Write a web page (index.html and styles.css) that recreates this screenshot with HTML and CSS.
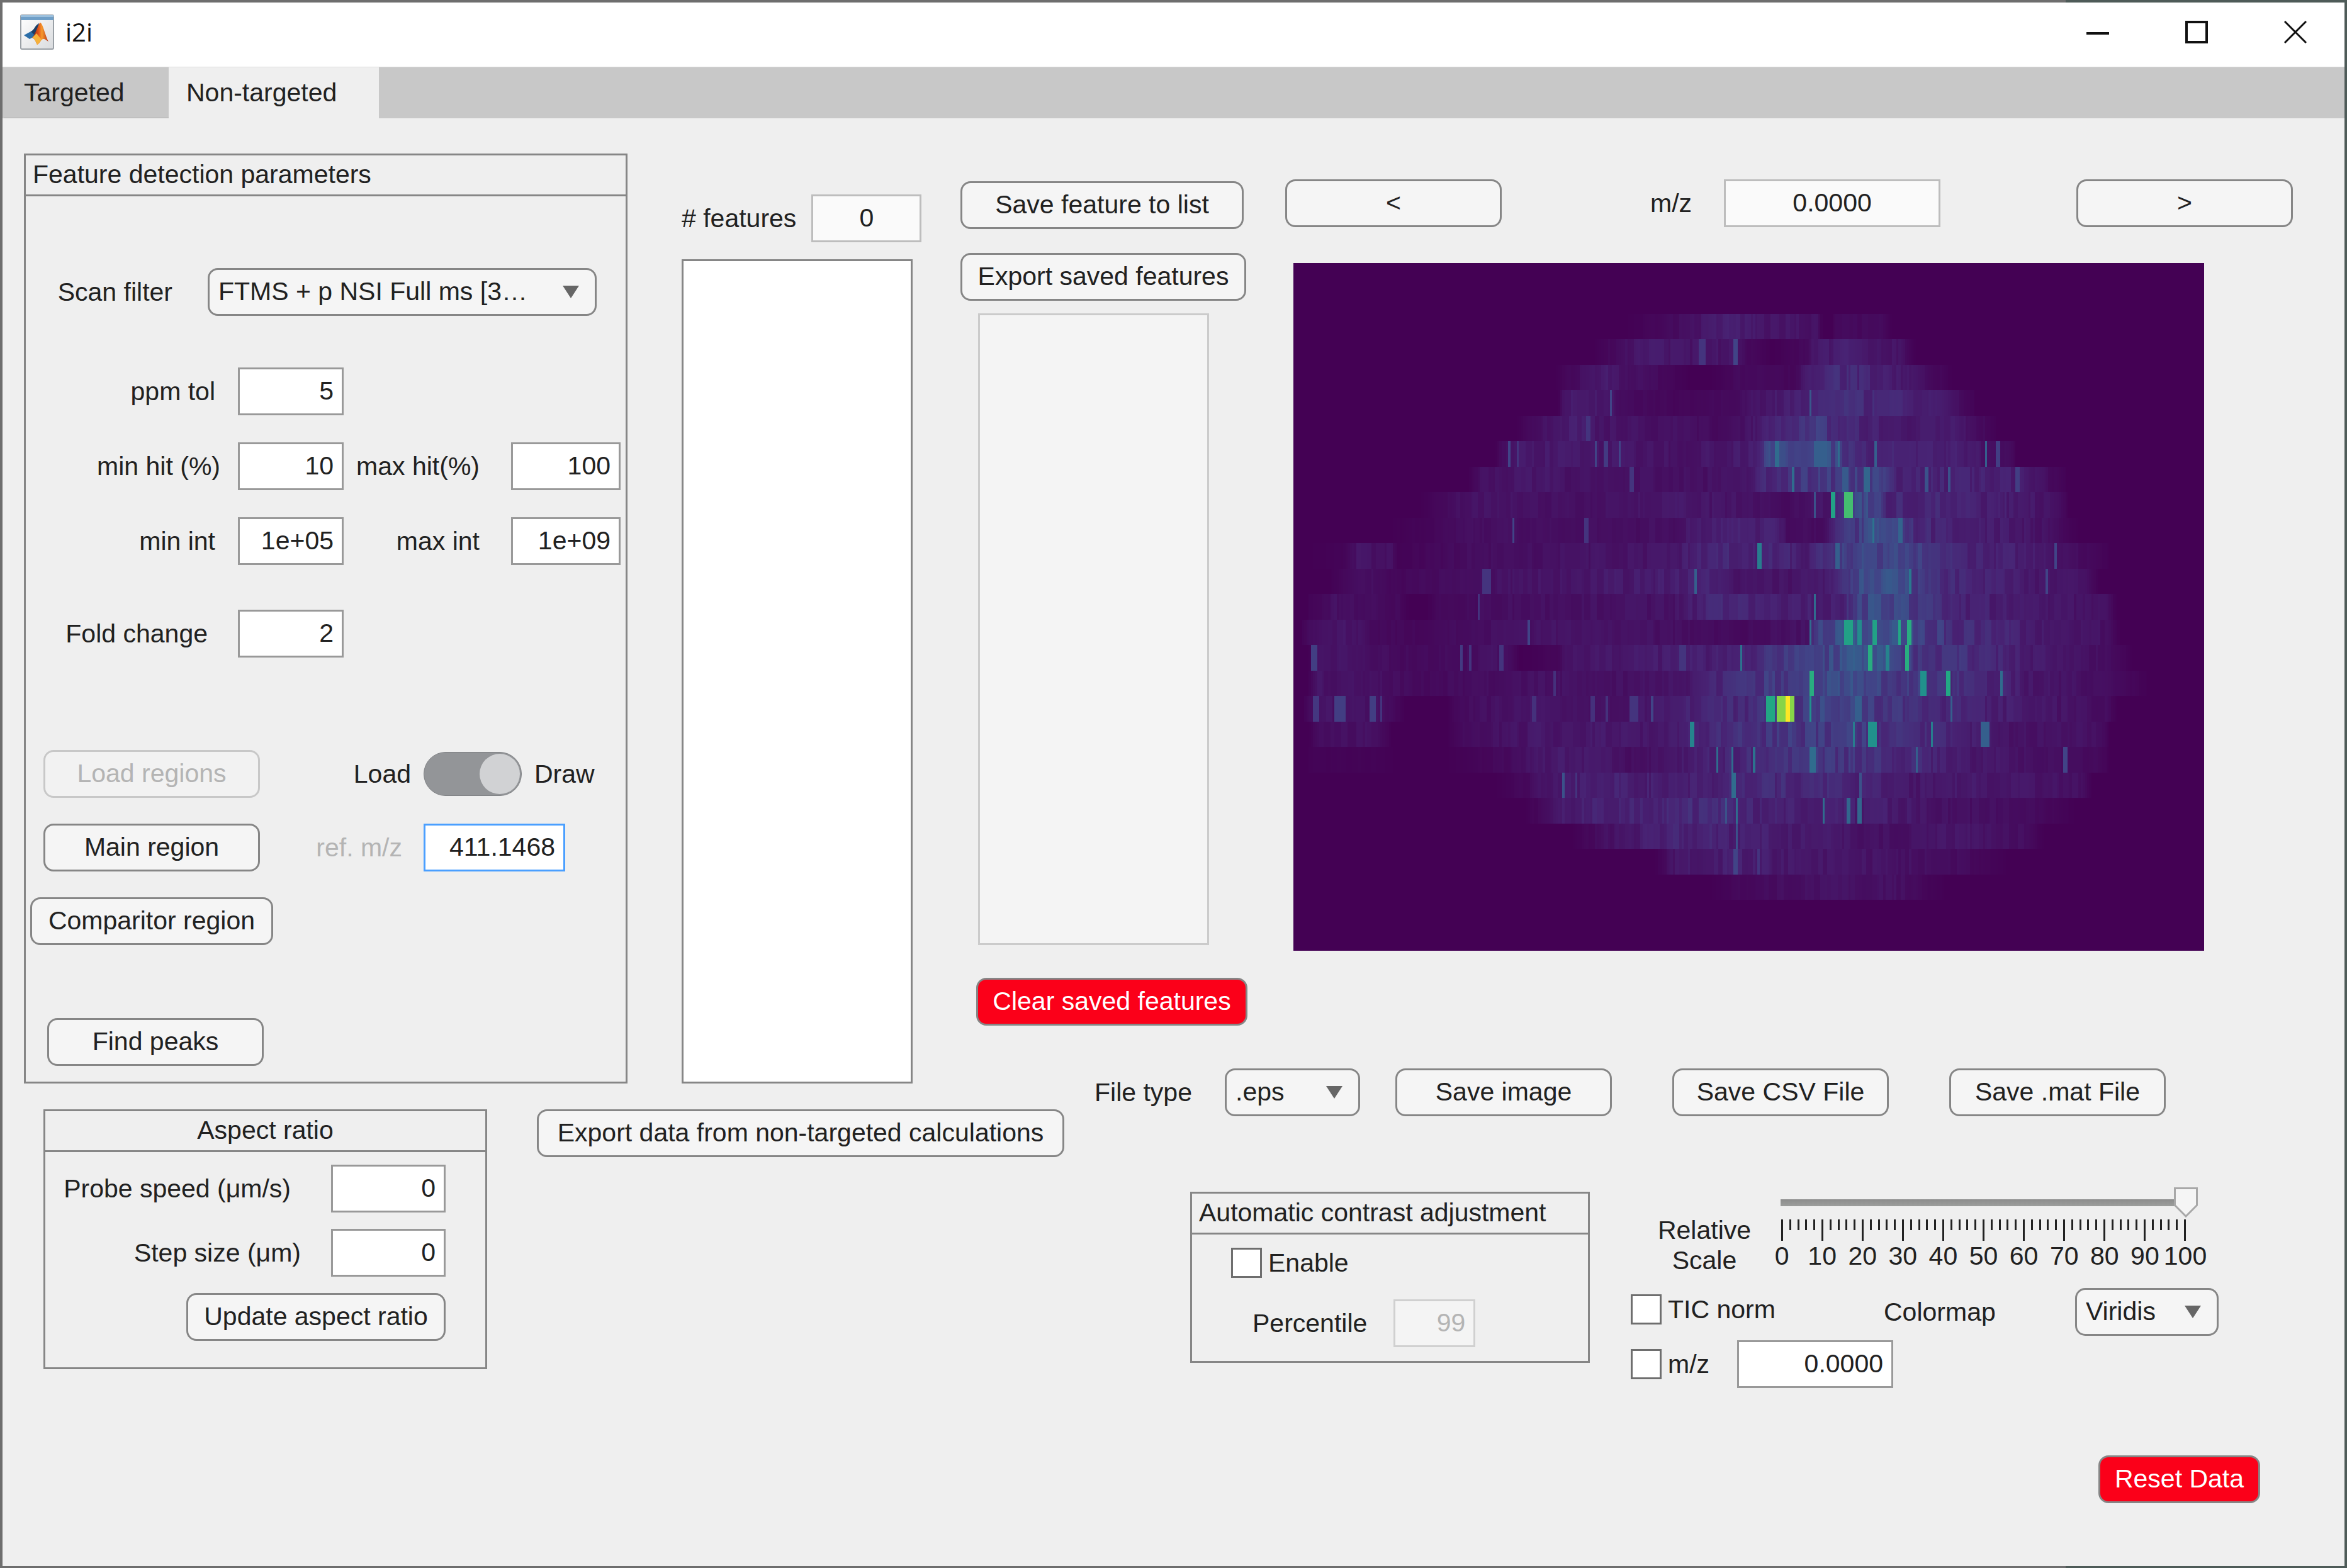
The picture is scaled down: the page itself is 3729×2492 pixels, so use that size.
FILE: index.html
```html
<!DOCTYPE html>
<html lang="en">
<head>
<meta charset="utf-8">
<meta name="viewport" content="width=device-width, initial-scale=1">
<title>i2i</title>
<link rel="stylesheet" href="styles.css">
</head>
<body>
<div class="window">
  <header class="titlebar">
    <svg class="app-icon" viewBox="0 0 54 56" aria-hidden="true">
      <defs>
        <linearGradient id="frame" x1="0" y1="0" x2="1" y2="1"><stop offset="0" stop-color="#ffffff"/><stop offset="1" stop-color="#d9dbde"/></linearGradient>
        <linearGradient id="peak" x1="0" y1="0" x2="1" y2="0"><stop offset="0" stop-color="#8c1d12"/><stop offset=".4" stop-color="#e2561b"/><stop offset=".6" stop-color="#f59a2d"/><stop offset="1" stop-color="#b8321a"/></linearGradient>
      </defs>
      <rect x="1" y="1" width="52" height="54" rx="2" fill="url(#frame)" stroke="#9aa0a6" stroke-width="2"/>
      <rect x="1" y="1" width="52" height="8" fill="#6f9fc8"/>
      <rect x="1" y="1" width="52" height="3" fill="#9cc0dd"/>
      <path d="M6 33l11-6c5-1 6-9 13-13l-7 25-4-2-4 2z" fill="#2b6ea8"/>
      <path d="M17 27c5-1 6-9 13-13l-6 20z" fill="#1c3f66"/>
      <path d="M32 13c-3 1-7 18-13 24 3 0 5 4 8 11 5-2 6-9 10-9 3 0 4 2 8 4-5-9-9-29-13-30z" fill="url(#peak)"/>
      <path d="M19 37c3 0 5 4 8 11 3-1 5-6 7-8l-8-10z" fill="#f6b23a"/>
    </svg>
    <h1 class="titlebar-name">i2i</h1>
    <div class="titlebar-buttons">
      <button class="titlebar-button" type="button" aria-label="Minimize"><svg viewBox="0 0 36 36" aria-hidden="true"><path d="M0 20h36"/></svg></button>
      <button class="titlebar-button" type="button" aria-label="Maximize"><svg viewBox="0 0 36 36" aria-hidden="true"><path d="M2 2h32v32H2z"/></svg></button>
      <button class="titlebar-button" type="button" aria-label="Close"><svg viewBox="0 0 36 36" aria-hidden="true"><path d="M1 1l34 34M35 1L1 35"/></svg></button>
    </div>
  </header>

  <nav class="tabs" role="tablist">
    <button class="tab tab-targeted" type="button" role="tab" aria-selected="false">Targeted</button>
    <button class="tab tab-selected" type="button" role="tab" aria-selected="true">Non-targeted</button>
  </nav>

  <main class="workspace">
    <section class="panel detection">
      <h2 class="panel-title">Feature detection parameters</h2>
      <div class="row scan-row">
        <label class="lead-label gap-xl" for="scan">Scan filter</label>
        <span class="dropdown dropdown-scan"><select id="scan"><option>FTMS + p NSI Full ms [3…</option></select></span>
      </div>
      <div class="thresholds">
        <div class="row">
          <label class="lead-label" for="ppm">ppm tol</label>
          <input class="field field-min" id="ppm" type="text" value="5">
        </div>
        <div class="row">
          <label class="lead-label gap-sm" for="minhit">min hit (%)</label>
          <input class="field field-min" id="minhit" type="text" value="10">
          <label class="max-label" for="maxhit">max hit(%)</label>
          <input class="field field-max" id="maxhit" type="text" value="100">
        </div>
        <div class="row">
          <label class="lead-label" for="minint">min int</label>
          <input class="field field-min" id="minint" type="text" value="1e+05">
          <label class="max-label" for="maxint">max int</label>
          <input class="field field-max" id="maxint" type="text" value="1e+09">
        </div>
      </div>
      <div class="row fold-row">
        <label class="lead-label gap-lg" for="fold">Fold change</label>
        <input class="field field-min" id="fold" type="text" value="2">
      </div>
      <div class="regions">
        <button class="button" type="button" disabled>Load regions</button>
        <label class="region-label gap-xs" for="mode">Load</label>
        <div class="mode">
          <input class="switch" id="mode" type="checkbox" role="switch" checked>
          <label for="mode">Draw</label>
        </div>
        <button class="button" type="button">Main region</button>
        <label class="region-label is-muted" for="refmz">ref. m/z</label>
        <input class="field field-ref is-focused" id="refmz" type="text" value="411.1468">
        <button class="button button-comparitor" type="button">Comparitor region</button>
      </div>
      <div class="find-row"><button class="button" type="button">Find peaks</button></div>
    </section>

    <section class="features">
      <div class="row features-count">
        <label for="count"># features</label>
        <input class="field field-count is-readonly" id="count" type="text" value="0" readonly>
      </div>
      <select class="listbox" size="20" aria-label="Detected features"></select>
    </section>

    <section class="saved">
      <button class="button button-save-feature" type="button">Save feature to list</button>
      <button class="button button-export-saved" type="button">Export saved features</button>
      <select class="listbox listbox-saved" size="20" aria-label="Saved features" disabled></select>
      <button class="button button-danger button-clear" type="button">Clear saved features</button>
    </section>

    <section class="viewer">
      <div class="row viewer-nav">
        <button class="button" type="button" aria-label="Previous feature">&lt;</button>
        <div class="row viewer-mz">
          <label for="viewmz">m/z</label>
          <input class="field field-viewmz is-readonly" id="viewmz" type="text" value="0.0000" readonly>
        </div>
        <button class="button button-next" type="button" aria-label="Next feature">&gt;</button>
      </div>
      <canvas class="ion-image" id="ion-image" width="420" height="27" role="img" aria-label="Ion image"></canvas>
    </section>

    <div class="lower-left">
      <section class="panel aspect">
        <h2 class="panel-title is-centered">Aspect ratio</h2>
        <div class="aspect-body">
          <div class="row">
            <label class="gap-xxl" for="speed">Probe speed (μm/s)</label>
            <input class="field field-aspect" id="speed" type="text" value="0">
          </div>
          <div class="row">
            <label class="gap-lg" for="step">Step size (μm)</label>
            <input class="field field-aspect" id="step" type="text" value="0">
          </div>
          <button class="button button-aspect" type="button">Update aspect ratio</button>
        </div>
      </section>
      <button class="button button-export-data" type="button">Export data from non-targeted calculations</button>
    </div>

    <section class="output">
      <div class="row file-row">
        <label class="file-label" for="filetype">File type</label>
        <span class="dropdown dropdown-file"><select id="filetype"><option>.eps</option></select></span>
        <div class="file-buttons">
          <button class="button" type="button">Save image</button>
          <button class="button" type="button">Save CSV File</button>
          <button class="button" type="button">Save .mat File</button>
        </div>
      </div>
      <div class="display-row">
        <section class="panel contrast">
          <h2 class="panel-title">Automatic contrast adjustment</h2>
          <div class="contrast-body">
            <label class="check"><input type="checkbox">Enable</label>
            <div class="row percentile-row">
              <label class="gap-md" for="percentile">Percentile</label>
              <input class="field field-percentile" id="percentile" type="text" value="99" disabled>
            </div>
          </div>
        </section>
        <div class="display-options">
          <div class="scale-row">
            <label class="scale-label" for="scale">Relative<br>Scale</label>
            <div class="scale">
              <input class="scale-slider" id="scale" type="range" min="0" max="100" value="100">
              <svg class="scale-ticks" viewBox="0 0 643 34" preserveAspectRatio="none" aria-hidden="true">
                <defs>
                  <pattern id="ticks" width="128" height="34" patternUnits="userSpaceOnUse">
                    <path fill="#222" d="M0 0h3v34H0zM13 0h3v17h-3zM26 0h3v17h-3zM38 0h3v17h-3zM51 0h3v17h-3zM64 0h3v34h-3zM77 0h3v17h-3zM90 0h3v17h-3zM102 0h3v17h-3zM115 0h3v17h-3z"/>
                  </pattern>
                </defs>
                <rect width="643" height="34" fill="url(#ticks)"/>
              </svg>
              <div class="scale-numbers" aria-hidden="true">
                <span>0</span><span>10</span><span>20</span><span>30</span><span>40</span><span>50</span><span>60</span><span>70</span><span>80</span><span>90</span><span>100</span>
              </div>
            </div>
          </div>
          <div class="row option-row">
            <label class="check check-tic"><input type="checkbox">TIC norm</label>
            <label class="colormap-label" for="colormap">Colormap</label>
            <span class="dropdown dropdown-map"><select id="colormap"><option>Viridis</option></select></span>
          </div>
          <div class="row option-row">
            <label class="check check-mz"><input type="checkbox">m/z</label>
            <input class="field field-norm" type="text" value="0.0000" aria-label="Normalisation m/z">
          </div>
        </div>
      </div>
      <button class="button button-danger button-reset" type="button">Reset Data</button>
    </section>
  </main>
</div>
<script src="ion-image.js"></script>
</body>
</html>
```
FILE: styles.css
```css
*, *::before, *::after { box-sizing: border-box; }

body {
  margin: 0;
  color: #212121;
  font-family: "Liberation Sans", Arial, Helvetica, sans-serif;
  font-size: 41px;
  line-height: 48px;
}

button, input, select { color: inherit; font: inherit; }
h1, h2 { margin: 0; font-weight: 400; }
label { white-space: nowrap; }

/* Window chrome */
.window {
  display: flex;
  flex-direction: column;
  min-height: 100vh;
  padding: 4px 4px 3px;
  background: linear-gradient(90deg, #6e6e6e 88%, #4e5b58 88%);
}

.titlebar {
  display: flex;
  align-items: center;
  height: 102px;
  padding: 0 0 8px 28px;
  background: #fff;
}
.app-icon { width: 54px; height: 56px; }
.titlebar-name {
  margin-left: 18px;
  color: #111;
  font-family: "Open Sans", "Noto Sans", sans-serif;
  font-size: 40px;
}
.titlebar-buttons { display: flex; margin-left: auto; }
.titlebar-button {
  display: grid;
  place-items: center;
  width: 157px;
  height: 92px;
  padding: 0;
  border: 0;
  background: none;
}
.titlebar-button svg {
  width: 36px;
  height: 36px;
  fill: none;
  stroke: #111;
  stroke-width: 4;
}
.titlebar-button:last-child svg { stroke-width: 3; }

.tabs {
  display: flex;
  height: 82px;
  padding-left: 2px;
  background: #c8c8c8;
  border-top: 1px solid #dcdcdc;
}
.tab {
  padding: 0;
  border: 0;
  border-bottom: 2px solid #c0c0c0;
  background: #c8c8c8;
  text-align: left;
}
.tab-targeted { width: 262px; padding-left: 32px; }
.tab-selected { width: 334px; padding-left: 28px; border-bottom-color: #efefef; background: #efefef; }

/* Shared controls */
.row { display: flex; align-items: center; }

.button {
  width: 344px;
  height: 76px;
  padding: 0 0 2px;
  border: 3px solid #868686;
  border-radius: 16px;
  background: #f5f5f5;
  white-space: nowrap;
}
.button:disabled { border-color: #c8c8c8; background: #f2f2f2; color: #b4b4b4; }
.button-danger { background: #fb0019; color: #fff; }

.field {
  height: 76px;
  padding: 0 13px 2px;
  border: 3px solid #999;
  border-radius: 0;
  background: #fff;
  text-align: right;
}
.field:disabled { border-color: #d0d0d0; background: #f4f4f4; color: #b4b4b4; }
.field.is-readonly { border-color: #bdbdbd; background: #fafafa; text-align: center; }
.field.is-focused { border-color: #4a9fff; }

.dropdown { display: flex; position: relative; }
.dropdown select {
  width: 100%;
  height: 76px;
  padding: 0 0 2px 14px;
  border: 3px solid #868686;
  border-radius: 16px;
  background: #f5f5f5;
  appearance: none;
}
.dropdown::after {
  content: "";
  position: absolute;
  top: 28px;
  right: 28px;
  width: 26px;
  height: 20px;
  background: #666;
  clip-path: polygon(0 0, 100% 0, 50% 100%);
  pointer-events: none;
}

.check { display: flex; align-items: center; gap: 10px; height: 48px; }
.check input {
  width: 49px;
  height: 48px;
  margin: 0;
  border: 3px solid #6e6e6e;
  background: #fff;
  appearance: none;
}

.listbox {
  flex: 1 1 0;
  width: 367px;
  min-height: 0;
  padding: 0;
  border: 3px solid #868686;
  border-radius: 0;
  background: #fff;
  appearance: none;
}
.listbox:disabled { border-color: #cbcbcb; background: #f4f4f4; opacity: 1; }

.panel { border: 3px solid #868686; }
.panel-title {
  height: 65px;
  padding: 6px 11px 0;
  border-bottom: 3px solid #868686;
  font-size: 41px;
}
.panel-title.is-centered { text-align: center; }

.gap-xs { padding-right: 20px; }
.gap-sm { padding-right: 28px; }
.gap-md { padding-right: 42px; }
.gap-lg { padding-right: 48px; }
.gap-xl { padding-right: 56px; }
.gap-xxl { padding-right: 64px; }

/* Workspace grid */
.workspace {
  flex: 1;
  display: grid;
  grid-template-columns:
    minmax(0, 1045fr) minmax(0, 443fr) minmax(0, 213fr)
    minmax(0, 303fr) minmax(0, 1601fr);
  grid-template-rows: auto 65px 1fr;
  padding: 56px 82px 0 34px;
  background: #efefef;
}

/* Feature detection panel */
.detection {
  grid-area: 1 / 1 / 3 / 2;
  margin: 0 86px 41px 0;
}
.lead-label { width: 337px; text-align: right; }
.lead-label:not(.gap-sm, .gap-lg, .gap-xl) { padding-right: 36px; }
.lead-label.gap-xl { width: 289px; }
.scan-row { margin-top: 114px; }
.dropdown-scan { width: 618px; }
.thresholds { display: grid; gap: 43px; margin-top: 82px; }
.field-min { width: 168px; }
.max-label { width: 266px; padding-right: 50px; text-align: right; }
.field-max { width: 174px; }
.fold-row { margin-top: 71px; }
.regions {
  display: grid;
  grid-template-columns: 400px 232px 1fr;
  align-items: center;
  gap: 41px 0;
  margin-top: 147px;
}
.regions > .button { justify-self: center; }
.button-comparitor { width: 386px; }
.region-label { text-align: right; }
.region-label.is-muted { padding-right: 34px; color: #b4b4b4; }
.mode { display: flex; align-items: center; gap: 20px; }
.switch {
  display: flex;
  justify-content: flex-end;
  width: 156px;
  height: 70px;
  margin: 0;
  padding: 2px;
  border: 1px solid #808285;
  border-radius: 35px;
  background: #939598;
  appearance: none;
}
.switch::before {
  content: "";
  width: 64px;
  height: 64px;
  border-radius: 50%;
  background: #d1d2d4;
}
.field-ref { width: 225px; }
.find-row { padding: 116px 0 23px 34px; display: flex; }

/* Detected and saved feature lists */
.features {
  grid-area: 1 / 2 / 3 / 3;
  display: flex;
  flex-direction: column;
  padding: 65px 0 41px;
}
.features-count { gap: 24px; margin-bottom: 27px; }
.field-count { width: 175px; }

.saved {
  grid-area: 1 / 3 / 2 / 5;
  display: flex;
  flex-direction: column;
  padding: 44px 0 68px;
}
.button-save-feature { width: 450px; }
.button-export-saved { width: 454px; margin-top: 38px; }
.listbox-saved { margin: 20px 0 52px 28px; }
.button-clear { width: 431px; margin-left: 25px; }

/* Ion image viewer */
.viewer { grid-area: 1 / 5 / 2 / 6; padding: 41px 0 187px; }
.viewer-mz { gap: 51px; margin-left: 236px; }
.field-viewmz { width: 344px; }
.button-next { margin-left: auto; }
.ion-image {
  display: block;
  width: calc(100% - 154px);
  aspect-ratio: 1447 / 1093;
  margin: 57px 0 0 13px;
  background: #440154;
  image-rendering: pixelated;
}

/* Aspect ratio and export */
.lower-left {
  grid-area: 3 / 1 / 4 / 4;
  display: flex;
  align-items: flex-start;
  gap: 79px;
  padding-left: 31px;
}
.aspect { width: 705px; }
.aspect-body {
  display: flex;
  flex-direction: column;
  align-items: flex-end;
  gap: 26px;
  padding: 20px 63px 42px 0;
}
.field-aspect { width: 182px; }
.button-aspect { width: 412px; }
.button-export-data { width: 838px; }

/* Output and display options */
.output {
  grid-area: 2 / 4 / 4 / 6;
  display: flex;
  flex-direction: column;
}
.file-label { width: 207px; }
.dropdown-file { width: 215px; }
.file-buttons { display: flex; gap: 96px; margin-left: 56px; }

.display-row {
  display: flex;
  align-items: flex-start;
  gap: 65px;
  margin: 113px 0 0 152px;
}
.contrast { width: 635px; margin-top: 7px; }
.contrast-body { padding: 21px 0 22px 62px; }
.percentile-row { margin: 34px 0 0 34px; }
.field-percentile { width: 130px; }

.scale-row { display: flex; padding-left: 40px; }
.scale-label { width: 154px; margin: 44px 45px 0 0; text-align: center; }
.scale { width: 643px; }
.scale-slider {
  display: block;
  width: 682px;
  height: 48px;
  margin: 0 0 3px -20px;
  background: linear-gradient(#8c8c8c, #9c9e9c) 19px 19px / 643px 11px no-repeat;
  appearance: none;
}
.scale-slider::-webkit-slider-thumb {
  width: 38px;
  height: 48px;
  background: url("data:image/svg+xml,%3Csvg xmlns='http://www.w3.org/2000/svg' viewBox='0 0 38 48'%3E%3Cpath d='M1.5 1.5h35v27L19 46 1.5 28.500z' fill='%23f5f5f5' stroke='%23a8a8a8' stroke-width='3'/%3E%3C/svg%3E") no-repeat;
  appearance: none;
}
.scale-ticks { display: block; width: 643px; height: 34px; }
.scale-numbers { display: flex; margin: 0 -31px; }
.scale-numbers span { display: flex; flex: 1 1 0; justify-content: center; width: 0; }

.option-row { margin-top: 7px; }
.scale-row + .option-row { margin-top: 20px; }
.check-tic { width: 402px; margin-bottom: 8px; }
.colormap-label { width: 304px; }
.dropdown-map { width: 228px; }
.check-mz { width: 169px; }
.field-norm { width: 248px; }

.button-reset { align-self: flex-end; width: 257px; margin: 107px 52px 0 0; }
```
FILE: ion-image.js
```js
// Draws the ion image: one scan line per row, signal mapped through viridis.
(function () {
  var X0 = 50, SPAN = 1312;
  var STOPS = [
    [68, 1, 84], [72, 36, 117], [65, 68, 135], [53, 95, 141], [42, 120, 142],
    [33, 145, 140], [34, 168, 132], [68, 191, 112], [122, 209, 81],
    [189, 223, 38], [253, 231, 37]
  ];

  // Signal envelope per scan line: position, intensity in thousandths.
  var LINES = {
    2: [525,0,560,15,620,50,680,100,720,70,780,60,805,50,810,0,825,0,830,30,895,30,910,0],
    3: [480,0,520,40,560,80,620,60,690,70,700,30,740,0,790,30,800,80,850,90,920,60,945,0],
    4: [425,0,450,30,500,80,540,50,590,20,620,0,650,0,690,30,770,20,790,80,830,140,900,110,950,50,1000,0],
    5: [430,0,440,80,500,80,530,30,600,20,680,30,740,80,790,120,850,140,900,120,960,100,1030,10],
    6: [370,0,410,60,450,90,520,60,600,50,660,30,700,60,740,120,790,200,840,140,900,90,1000,80,1060,10],
    7: [340,0,360,70,420,80,520,70,600,60,680,80,715,100,735,240,790,220,820,270,860,150,900,110,1000,100,1090,20],
    8: [300,0,320,50,400,70,480,50,640,50,700,60,730,140,790,180,850,200,890,250,910,120,1000,110,1090,90,1160,10],
    9: [230,0,270,30,310,70,400,50,600,70,700,60,760,30,820,70,830,100,865,250,890,220,900,130,1000,120,1150,60,1165,0],
    10: [185,0,250,20,330,50,440,40,600,50,640,100,740,100,760,40,810,40,830,130,880,240,910,220,950,130,1050,90,1130,60,1180,0],
    11: [70,0,120,10,140,60,190,50,200,10,300,40,400,50,600,70,650,130,760,120,780,80,820,150,850,240,900,260,940,200,1000,130,1100,90,1210,20,1225,0],
    12: [100,0,150,50,200,20,300,50,450,70,600,90,650,110,700,60,760,60,820,80,840,200,870,250,930,260,960,160,1020,120,1100,80,1190,60,1210,0],
    13: [70,10,110,50,200,30,215,0,240,0,260,30,400,50,600,60,650,130,760,100,840,100,860,240,900,270,940,200,1000,120,1100,80,1220,50,1235,0],
    14: [60,10,90,70,130,70,160,30,240,20,300,40,450,60,600,50,700,30,790,60,800,220,850,300,900,280,940,250,1000,150,1100,100,1220,50,1240,0],
    15: [70,0,80,50,130,60,200,30,300,40,350,60,375,0,430,20,440,60,600,90,690,100,720,160,790,220,850,300,900,260,960,170,1010,160,1100,90,1230,40,1260,0],
    16: [70,0,80,60,130,60,200,40,250,30,400,50,600,60,640,100,740,200,850,270,900,220,1000,150,1070,120,1100,80,1250,30,1280,0],
    17: [65,10,80,60,170,50,190,30,210,0,270,0,290,40,400,60,500,50,620,110,700,140,820,240,870,190,1000,120,1100,80,1220,40,1235,0],
    18: [70,0,90,50,170,50,190,0,270,0,290,30,400,70,600,80,640,120,720,170,850,200,900,170,1000,120,1060,70,1210,50,1225,0],
    19: [70,10,160,10,200,0,270,0,380,40,400,80,500,70,540,40,600,80,740,160,850,180,950,130,1030,80,1210,30,1225,0],
    20: [340,0,390,30,410,70,500,110,600,90,750,140,850,130,930,70,1000,80,1180,50,1200,0],
    21: [380,0,400,20,440,90,550,120,650,140,750,100,900,90,1000,50,1100,40,1160,10,1175,0],
    22: [450,0,500,50,600,120,700,100,800,80,900,50,1000,70,1100,40,1130,0],
    23: [570,0,600,70,680,100,800,70,900,60,1000,40,1060,10,1080,0],
    24: [650,0,700,30,780,50,830,60,920,50,970,10,990,0]
  };

  // Isolated peaks per scan line: centre, width, intensity in thousandths.
  var PEAKS = {
    3: [639,8,150,686,6,200],
    5: [507,4,200,795,4,270],
    6: [475,5,150],
    7: [360,3,200,372,3,150,485,3,200,500,6,170,519,3,200,745,5,350,810,18,300,835,4,350,890,4,300,1050,4,300,1065,6,180],
    8: [537,6,150,769,4,350,845,8,280,877,10,330,960,5,250,994,4,250,1092,6,180],
    9: [829,7,570,800,2,250,849,12,700],
    10: [365,2,200,471,5,150,885,4,380,925,6,320],
    11: [720,5,420,835,6,300,1147,4,200],
    12: [327,12,150,629,3,300,938,4,400,1135,3,200],
    13: [318,3,150,803,4,350],
    14: [388,4,200,795,4,350,865,6,480,850,13,570,885,5,570,922,4,600,935,5,620],
    15: [79,8,180,293,4,170,305,3,150,350,6,150,610,10,150,695,4,380,879,5,620,905,5,450,932,5,620],
    16: [427,4,140,795,5,620,957,10,500,994,5,600,1069,4,350],
    17: [84,10,160,118,16,180,163,8,180,176,4,150,398,6,140,480,6,140,502,4,140,539,12,150,568,4,200,736,12,600,760,24,820,764,7,1000,795,4,500,865,10,300,997,4,300],
    18: [623,5,450,859,4,420,882,11,500,969,4,420,1047,12,300],
    19: [661,3,350,684,3,350,713,4,380,798,10,350,948,4,300,1160,5,200],
    20: [438,4,250,458,4,150,683,5,350,866,3,250],
    21: [672,3,250,689,4,350,814,4,350,848,5,330,866,6,330],
    22: [688,4,250],
    23: [688,6,200,719,4,150]
  };

  var canvas = document.getElementById("ion-image");
  var ctx = canvas.getContext("2d");
  var cols = canvas.width;
  var image = ctx.createImageData(cols, canvas.height);
  var seed = 7;

  function random() {
    seed = (seed * 16807) % 2147483647;
    return seed / 2147483647;
  }

  function envelope(line, x) {
    for (var i = 0; line && i + 3 < line.length; i += 2) {
      if (x >= line[i] && x < line[i + 2]) {
        var t = (x - line[i]) / (line[i + 2] - line[i]);
        return (line[i + 1] + t * (line[i + 3] - line[i + 1])) / 1000;
      }
    }
    return 0;
  }

  for (var row = 0; row < canvas.height; row++) {
    var values = [], run = 0, gain = 1, col, i;
    for (col = 0; col < cols; col++) {
      if (run-- <= 0) {
        run = Math.floor(random() * 3);
        gain = 0.6 + random() * 0.5;
      }
      values.push(envelope(LINES[row], X0 + col * SPAN / cols) * gain);
    }
    var peaks = PEAKS[row] || [];
    for (i = 0; i < peaks.length; i += 3) {
      var first = Math.round((peaks[i] - peaks[i + 1] / 2 - X0) * cols / SPAN);
      var count = Math.max(1, Math.round(peaks[i + 1] * cols / SPAN));
      for (col = first; col < first + count; col++) values[col] = peaks[i + 2] / 1000;
    }
    for (col = 0; col < cols; col++) {
      var v = Math.min(1, values[col]) * 10;
      var k = Math.min(9, Math.floor(v));
      var at = (row * cols + col) * 4;
      for (i = 0; i < 3; i++) {
        image.data[at + i] = STOPS[k][i] + (STOPS[k + 1][i] - STOPS[k][i]) * (v - k);
      }
      image.data[at + 3] = 255;
    }
  }
  ctx.putImageData(image, 0, 0);
})();
```
